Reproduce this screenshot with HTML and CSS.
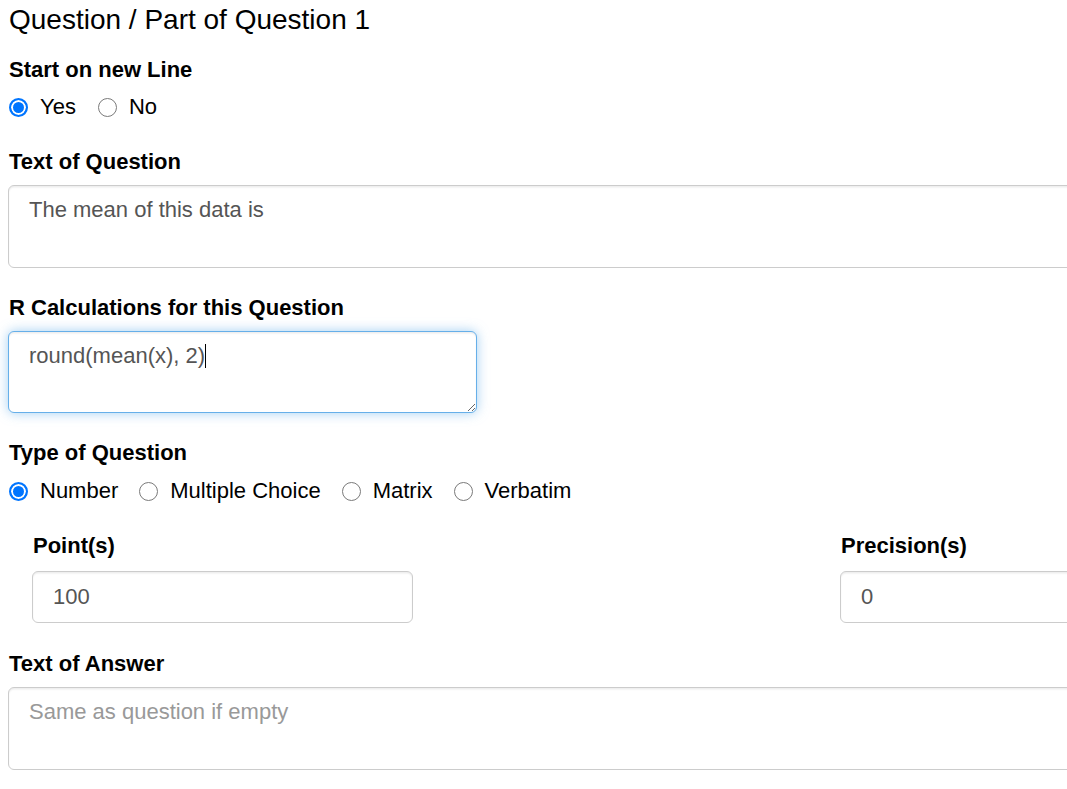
FILE: index.html
```html
<!DOCTYPE html>
<html lang="en">
<head>
<meta charset="utf-8">
<title>Question / Part of Question 1</title>
<link rel="stylesheet" href="styles.css">
</head>
<body>
<form class="form">
  <h4 class="title">Question / Part of Question 1</h4>

  <div class="group group-first">
    <label class="label">Start on new Line</label>
    <div class="radios">
      <label class="radio-item"><input type="radio" name="newline" class="radio" checked><span>Yes</span></label>
      <label class="radio-item"><input type="radio" name="newline" class="radio"><span>No</span></label>
    </div>
  </div>

  <div class="group">
    <label class="label">Text of Question</label>
    <textarea class="field area">The mean of this data is</textarea>
  </div>

  <div class="group">
    <label class="label">R Calculations for this Question</label>
    <div class="area-wrap">
      <textarea class="field area area-small focused">round(mean(x), 2)</textarea>
      <span class="caret-line"></span>
    </div>
  </div>

  <div class="group">
    <label class="label">Type of Question</label>
    <div class="radios radios-type">
      <label class="radio-item"><input type="radio" name="qtype" class="radio" checked><span>Number</span></label>
      <label class="radio-item"><input type="radio" name="qtype" class="radio"><span>Multiple Choice</span></label>
      <label class="radio-item"><input type="radio" name="qtype" class="radio"><span>Matrix</span></label>
      <label class="radio-item"><input type="radio" name="qtype" class="radio"><span>Verbatim</span></label>
    </div>
  </div>

  <div class="group cols">
    <div class="col col-points">
      <label class="label">Point(s)</label>
      <input type="text" class="field input input-points" value="100">
    </div>
    <div class="col col-precision">
      <label class="label">Precision(s)</label>
      <input type="text" class="field input" value="0">
    </div>
  </div>

  <div class="group group-answer">
    <label class="label">Text of Answer</label>
    <textarea class="field area" placeholder="Same as question if empty"></textarea>
  </div>
</form>
</body>
</html>
```

FILE: styles.css
```css
html, body {
  margin: 0;
  padding: 0;
  overflow: hidden;
  background: #fff;
}

body {
  font-family: "Liberation Sans", Arial, sans-serif;
  font-size: 22px;
  line-height: 30px;
  color: #000;
}

.form {
  width: 1250px;
  padding: 0 8px;
}

.title {
  margin: 5px 0 0 1px;
  font-size: 28px;
  line-height: 30px;
  font-weight: normal;
  color: #000;
}

.group {
  margin-top: 25px;
}

.group-first {
  margin-top: 20px;
}

.group-answer {
  margin-top: 26px;
}

.label {
  display: block;
  font-weight: bold;
  font-size: 22px;
  line-height: 30px;
  margin: 0 0 8px 1px;
}

.radios {
  display: flex;
  gap: 21px;
  margin-top: -1px;
  height: 30px;
  align-items: center;
}

.radios-type {
  margin-top: 2px;
  gap: 20px;
}

.radio-item {
  display: inline-flex;
  align-items: center;
  gap: 12px;
}

.radio {
  appearance: none;
  -webkit-appearance: none;
  box-sizing: border-box;
  width: 19px;
  height: 19px;
  margin: 0 0 0 1px;
  border: 1.5px solid #7a7a7a;
  border-radius: 50%;
  background: #fff;
}

.radio:checked {
  border: 2px solid #0075ff;
  background: #0075ff;
  box-shadow: inset 0 0 0 2px #fff;
}

.field {
  display: block;
  box-sizing: border-box;
  width: 100%;
  margin: 0;
  font-family: "Liberation Sans", Arial, sans-serif;
  font-size: 22px;
  line-height: 30px;
  color: #555;
  background: #fff;
  border: 1px solid #ccc;
  border-radius: 6px;
  box-shadow: inset 0 1.5px 1.5px rgba(0, 0, 0, 0.075);
  padding: 9px 20px;
  outline: none;
}

.field::placeholder {
  color: #999;
}

.area {
  height: 83px;
  resize: vertical;
}

.area-wrap {
  position: relative;
  width: 469px;
}

.area-small {
  width: 469px;
  height: 82px;
  resize: both;
}

.caret-line {
  position: absolute;
  left: 197px;
  top: 13px;
  width: 1px;
  height: 24px;
  background: #000;
}

.focused {
  border-color: #66afe9;
  box-shadow: inset 0 1.5px 1.5px rgba(0, 0, 0, 0.075), 0 0 12px rgba(102, 175, 233, 0.6);
}

.input {
  height: 52px;
}

.cols {
  display: flex;
  padding-left: 24px;
}

.cols .label {
  margin-bottom: 10px;
}

.col-points {
  width: 808px;
  flex: none;
}

.input-points {
  width: 381px;
}

.col-precision {
  flex: 1;
}
```
